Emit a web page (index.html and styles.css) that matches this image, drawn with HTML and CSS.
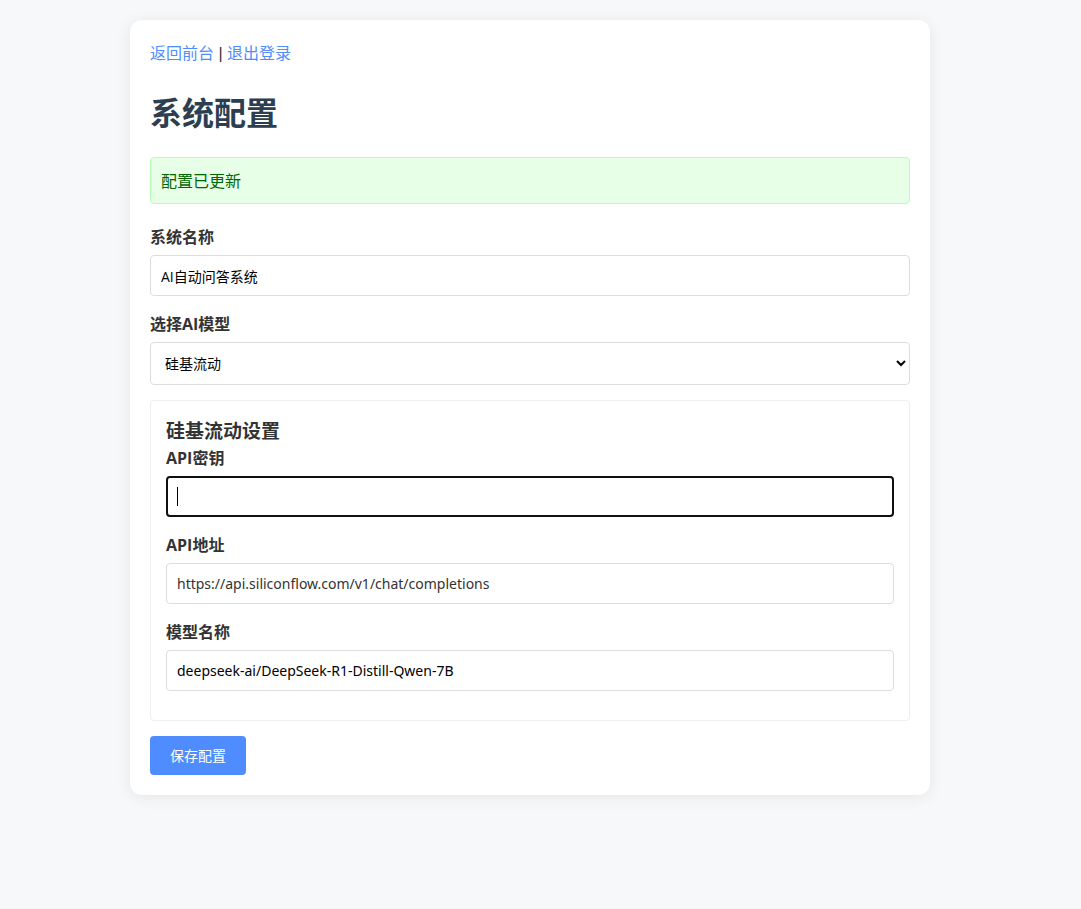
FILE: index.html
```html
<!DOCTYPE html>
<html lang="zh-CN">
<head>
<meta charset="UTF-8">
<meta name="viewport" content="width=device-width, initial-scale=1">
<title>系统配置</title>
<link rel="stylesheet" href="styles.css">
</head>
<body>
<main class="container">
  <nav class="top-links"><a href="#front">返回前台</a> | <a href="#logout">退出登录</a></nav>
  <h1 class="title">系统配置</h1>
  <div class="message" role="status">配置已更新</div>
  <form class="config-form">
    <div class="form-group">
      <label for="system-name">系统名称</label>
      <input class="control" type="text" id="system-name" value="AI自动问答系统">
    </div>
    <div class="form-group">
      <label for="ai-model">选择AI模型</label>
      <select class="control select" id="ai-model">
        <option selected>硅基流动</option>
      </select>
    </div>
    <section class="settings">
      <h3 class="settings-title">硅基流动设置</h3>
      <div class="form-group">
        <label for="api-key">API密钥</label>
        <div class="field">
          <input class="control key" type="text" id="api-key" autocomplete="off" autofocus>
          <span class="caret" aria-hidden="true"></span>
        </div>
      </div>
      <div class="form-group">
        <label for="api-url">API地址</label>
        <input class="control latin muted" type="text" id="api-url" value="https://api.siliconflow.com/v1/chat/completions">
      </div>
      <div class="form-group">
        <label for="model-name">模型名称</label>
        <input class="control latin" type="text" id="model-name" value="deepseek-ai/DeepSeek-R1-Distill-Qwen-7B">
      </div>
    </section>
    <button class="save" type="submit">保存配置</button>
  </form>
</main>
</body>
</html>
```
FILE: styles.css
```css
* {
  box-sizing: border-box;
}

body {
  margin: 0;
  padding: 20px 21px 20px 0;
  background: #f7f8fa;
  color: #333;
  font-family: "Open Sans", "Noto Sans CJK SC", sans-serif;
  font-size: 16px;
  line-height: 26px;
}

.container {
  max-width: 800px;
  margin: 0 auto;
  padding: 20px;
  background: #fff;
  border-radius: 12px;
  box-shadow: 0 2px 16px rgba(0, 0, 0, 0.08);
}

.top-links {
  font-family: "Liberation Sans", "Noto Sans CJK SC", sans-serif;
  line-height: 28px;
}

.top-links a {
  color: #4f8cff;
  text-decoration: none;
}

.title {
  margin: 19px 0;
  color: #2c3e50;
  font-size: 32px;
  line-height: 51px;
}

.message {
  margin-bottom: 20px;
  padding: 11px 10px 10px;
  border: 1px solid #b3ffb3;
  border-radius: 4px;
  background: #e6ffe6;
  color: #006600;
  line-height: 24px;
}

.form-group {
  margin-bottom: 15px;
}

.form-group label {
  display: block;
  margin-bottom: 5px;
  font-weight: bold;
}

.control {
  display: block;
  width: 100%;
  height: 41px;
  padding: 10px;
  border: 1px solid #ddd;
  border-radius: 4px;
  background: #fff;
  color: #000;
  font-family: inherit;
  font-size: 14px;
  line-height: 19px;
}

.control:focus {
  outline: 2px solid #101010;
  outline-offset: -2px;
}

.select {
  height: 43px;
}

.latin {
  font-family: "Noto Sans", "Noto Sans CJK SC", sans-serif;
}

.muted {
  color: #333;
}

.field {
  position: relative;
}

.key {
  caret-color: transparent;
}

/* text cursor of the focused field */
.caret {
  display: none;
  position: absolute;
  top: 11px;
  left: 11px;
  width: 1px;
  height: 19px;
  background: #000;
  pointer-events: none;
}

.key:focus + .caret {
  display: block;
}

.settings {
  margin-bottom: 15px;
  padding: 17px 15px 14px;
  border: 1px solid #eee;
  border-radius: 4px;
}

.settings-title {
  margin: 0;
  font-size: 19px;
  line-height: 27px;
}

.save {
  display: block;
  padding: 10px 20px;
  border: 0;
  border-radius: 4px;
  background: #4f8cff;
  color: #fff;
  font-family: inherit;
  font-size: 14px;
  line-height: 19px;
  cursor: pointer;
}
```
